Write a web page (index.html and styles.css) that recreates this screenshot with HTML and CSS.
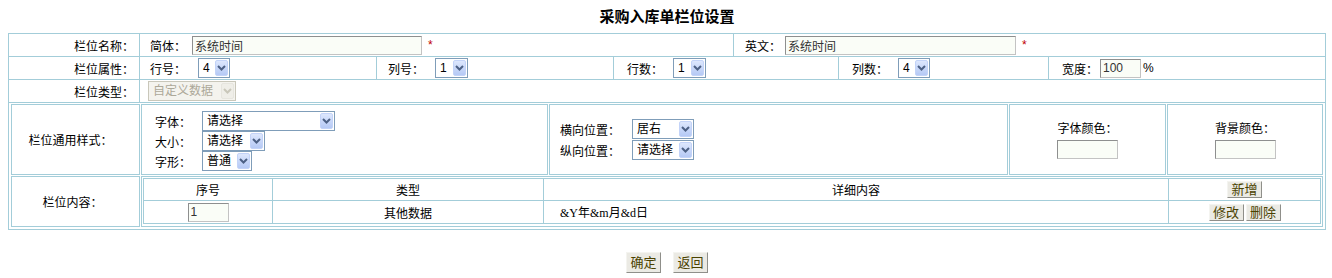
FILE: index.html
```html
<!DOCTYPE html>
<html lang="zh-CN">
<head>
<meta charset="UTF-8">
<meta name="viewport" content="width=device-width, initial-scale=1.0">
<title>采购入库单栏位设置</title>
<link rel="stylesheet" href="styles.css">
</head>
<body>
    <h1>采购入库单栏位设置</h1>

    <div class="frame">
        <!-- 栏位名称 -->
        <div class="row row-name">
            <div class="label">栏位名称：</div>
            <div class="cell pl-10"><span class="mr-6">简体：</span><input class="txt w230" type="text" value="系统时间"><span class="req">*</span></div>
            <div class="cell pl-11"><span class="mr-4">英文：</span><input class="txt w231" type="text" value="系统时间"><span class="req">*</span></div>
        </div>

        <!-- 栏位属性 -->
        <div class="row row-attr">
            <div class="label">栏位属性：</div>
            <div class="cell pl-10"><span class="mr-12">行号：</span>
                <span class="sel w32"><span class="sel-text">4</span><span class="sel-btn"><svg width="9" height="6" viewBox="0 0 9 6"><polyline points="1,1 4.5,4.5 8,1" fill="none" stroke="#4d6185" stroke-width="2"/></svg></span></span>
            </div>
            <div class="cell pl-11"><span class="mr-11">列号：</span>
                <span class="sel w33"><span class="sel-text">1</span><span class="sel-btn"><svg width="9" height="6" viewBox="0 0 9 6"><polyline points="1,1 4.5,4.5 8,1" fill="none" stroke="#4d6185" stroke-width="2"/></svg></span></span>
            </div>
            <div class="cell pl-13"><span class="mr-10">行数：</span>
                <span class="sel w33"><span class="sel-text">1</span><span class="sel-btn"><svg width="9" height="6" viewBox="0 0 9 6"><polyline points="1,1 4.5,4.5 8,1" fill="none" stroke="#4d6185" stroke-width="2"/></svg></span></span>
            </div>
            <div class="cell pl-13"><span class="mr-10">列数：</span>
                <span class="sel w32"><span class="sel-text">4</span><span class="sel-btn"><svg width="9" height="6" viewBox="0 0 9 6"><polyline points="1,1 4.5,4.5 8,1" fill="none" stroke="#4d6185" stroke-width="2"/></svg></span></span>
            </div>
            <div class="cell pl-13"><span class="mr-2">宽度：</span><input class="txt w41" type="text" value="100"><span class="unit">%</span></div>
        </div>

        <!-- 栏位类型 -->
        <div class="row row-type">
            <div class="label">栏位类型：</div>
            <div class="cell pl-8">
                <span class="sel disabled w88"><span class="sel-text">自定义数据</span><span class="sel-btn"><svg width="9" height="6" viewBox="0 0 9 6"><polyline points="1,1 4.5,4.5 8,1" fill="none" stroke="#c9c7ba" stroke-width="2"/></svg></span></span>
            </div>
        </div>

        <div class="styles">
            <div class="box box-label">栏位通用样式：</div>

            <div class="box box-font">
                <div class="line"><span class="cap-3">字体：</span>
                    <span class="sel w133"><span class="sel-text">请选择</span><span class="sel-btn"><svg width="9" height="6" viewBox="0 0 9 6"><polyline points="1,1 4.5,4.5 8,1" fill="none" stroke="#4d6185" stroke-width="2"/></svg></span></span>
                </div>
                <div class="line"><span class="cap-3">大小：</span>
                    <span class="sel w63"><span class="sel-text">请选择</span><span class="sel-btn"><svg width="9" height="6" viewBox="0 0 9 6"><polyline points="1,1 4.5,4.5 8,1" fill="none" stroke="#4d6185" stroke-width="2"/></svg></span></span>
                </div>
                <div class="line"><span class="cap-3">字形：</span>
                    <span class="sel w50"><span class="sel-text">普通</span><span class="sel-btn"><svg width="9" height="6" viewBox="0 0 9 6"><polyline points="1,1 4.5,4.5 8,1" fill="none" stroke="#4d6185" stroke-width="2"/></svg></span></span>
                </div>
            </div>

            <div class="box box-pos">
                <div class="line line-21"><span class="cap-5">横向位置：</span>
                    <span class="sel w62"><span class="sel-text">居右</span><span class="sel-btn"><svg width="9" height="6" viewBox="0 0 9 6"><polyline points="1,1 4.5,4.5 8,1" fill="none" stroke="#4d6185" stroke-width="2"/></svg></span></span>
                </div>
                <div class="line line-21"><span class="cap-5">纵向位置：</span>
                    <span class="sel w62"><span class="sel-text">请选择</span><span class="sel-btn"><svg width="9" height="6" viewBox="0 0 9 6"><polyline points="1,1 4.5,4.5 8,1" fill="none" stroke="#4d6185" stroke-width="2"/></svg></span></span>
                </div>
            </div>

            <div class="box box-color">
                <div class="color-cap">字体颜色：</div>
                <input class="txt w61" type="text" value="">
            </div>

            <div class="box box-color">
                <div class="color-cap">背景颜色：</div>
                <input class="txt w61" type="text" value="">
            </div>

            <div class="box box-label box-label-content">栏位内容：</div>

            <div class="box box-content">
                <div class="items">
                    <div class="it head">序号</div>
                    <div class="it head">类型</div>
                    <div class="it head">详细内容</div>
                    <div class="it head"><button class="btn btn-sm" type="button">新增</button></div>

                    <div class="it"><input class="txt w41" type="text" value="1"></div>
                    <div class="it">其他数据</div>
                    <div class="it detail">&amp;Y年&amp;m月&amp;d日</div>
                    <div class="it btns"><button class="btn btn-sm" type="button">修改</button><button class="btn btn-sm" type="button">删除</button></div>
                </div>
            </div>
        </div>
    </div>

    <div class="actions">
        <button class="btn btn-lg" type="button">确定</button>
        <button class="btn btn-lg" type="button">返回</button>
    </div>
</body>
</html>
```

FILE: styles.css
```css
body {
    margin: 8px 6px 8px 8px;
    background-color: #ffffff;
    color: #000000;
    font-family: "Liberation Sans", "Noto Sans CJK SC", sans-serif;
    font-size: 12px;
}

h1 {
    margin: 0 0 7px;
    font-size: 15px;
    line-height: 18px;
    font-weight: bold;
    text-align: center;
}

.frame {
    width: 1318px;
    box-sizing: border-box;
    border: 1px solid #a3cdd9;
}

.row {
    display: grid;
    height: 23px;
    box-sizing: border-box;
    border-bottom: 1px solid #a3cdd9;
}

.row-name {
    grid-template-columns: 130px 594px 1fr;
}

.row-attr {
    grid-template-columns: 130px 237px 237px 225px 210px 1fr;
}

.row-type {
    grid-template-columns: 130px 1fr;
}

.label {
    display: flex;
    align-items: center;
    justify-content: flex-end;
    padding-right: 5px;
}

.cell {
    display: flex;
    align-items: center;
    border-left: 1px solid #a3cdd9;
}

.pl-8 { padding-left: 8px; }
.pl-10 { padding-left: 10px; }
.pl-11 { padding-left: 11px; }
.pl-13 { padding-left: 13px; }

.mr-2 { margin-right: 2px; }
.mr-4 { margin-right: 4px; }
.mr-6 { margin-right: 6px; }
.mr-10 { margin-right: 10px; }
.mr-11 { margin-right: 11px; }
.mr-12 { margin-right: 12px; }

/* text inputs */
.txt {
    height: 19px;
    box-sizing: border-box;
    margin: 0;
    padding: 0 2px;
    border: 1px solid;
    border-color: #8e8f8f #c3c3c3 #c3c3c3 #8e8f8f;
    background-color: #fafdf7;
    color: #333333;
    font-family: "Liberation Sans", "Noto Sans CJK SC", sans-serif;
    font-size: 12px;
}

.w41 { width: 41px; }
.w61 { width: 61px; }
.w230 { width: 230px; }
.w231 { width: 231px; }

.req {
    margin-left: 6px;
    color: #c00000;
}

.unit {
    margin-left: 2px;
}

/* dropdowns */
.sel {
    display: inline-flex;
    align-items: center;
    height: 20px;
    box-sizing: border-box;
    padding: 1px;
    border: 1px solid #7f9db9;
    background-color: #ffffff;
}

.sel-text {
    flex: 1;
    padding-left: 3px;
    line-height: 16px;
    white-space: nowrap;
    overflow: hidden;
}

.sel-btn {
    display: flex;
    align-items: center;
    justify-content: center;
    width: 13px;
    height: 16px;
    box-sizing: border-box;
    border: 1px solid #c3d3f8;
    border-radius: 2px;
    background: linear-gradient(#dde7fd, #b5c9f5);
}

.sel.disabled {
    border-color: #c9c7ba;
    background-color: #f4f3ee;
    color: #aca899;
}

.sel.disabled .sel-btn {
    border-color: #e6e5de;
    background: #efeee8;
}

.w32 { width: 32px; }
.w33 { width: 33px; }
.w50 { width: 50px; }
.w62 { width: 62px; }
.w63 { width: 63px; }
.w88 { width: 88px; }
.w133 { width: 133px; }

/* style + content block */
.styles {
    display: grid;
    grid-template-columns: 129px 407px 459px 157px 1fr;
    grid-template-rows: 71px 51px;
    gap: 1px;
    padding: 1px 2px 2px 2px;
}

.box {
    box-sizing: border-box;
    border: 1px solid #a3cdd9;
}

.box-label {
    display: flex;
    align-items: center;
    justify-content: center;
    padding-right: 10px;
}

.box-label-content {
    padding-right: 6px;
}

.box-font {
    display: flex;
    flex-direction: column;
    justify-content: center;
    padding: 3px 0 0 13px;
}

.box-pos {
    display: flex;
    flex-direction: column;
    justify-content: center;
    padding-left: 10px;
}

.line {
    display: flex;
    align-items: center;
    height: 20px;
}

.line-21 {
    height: 21px;
}

.cap-3 {
    width: 47px;
}

.cap-5 {
    width: 72px;
}

.box-color {
    display: flex;
    flex-direction: column;
    align-items: center;
    justify-content: center;
    gap: 3px;
}

.color-cap {
    line-height: 16px;
}

.box-content {
    grid-column: 2 / 6;
    padding: 1px 1px 2px 1px;
}

.items {
    display: grid;
    grid-template-columns: 129px 271px 625px 1fr;
    grid-template-rows: 22px 23px;
    border-left: 1px solid #a3cdd9;
    border-top: 1px solid #a3cdd9;
}

.it {
    display: flex;
    align-items: center;
    justify-content: center;
    gap: 2px;
    border-right: 1px solid #a3cdd9;
    border-bottom: 1px solid #a3cdd9;
}

.it.detail {
    justify-content: flex-start;
    padding-left: 16px;
    font-family: "Liberation Serif", "Noto Sans CJK SC", serif;
}

/* buttons */
.btn {
    width: 35px;
    margin: 0;
    padding: 0;
    border: 1px solid;
    border-color: #f4f4f0 #8f8f8a #8f8f8a #f4f4f0;
    background-color: #ebeae4;
    color: #4a4200;
    font-family: "Liberation Sans", "Noto Sans CJK SC", sans-serif;
    font-size: 13px;
    line-height: 1;
}

.btn-sm {
    height: 17px;
}

.btn-lg {
    height: 21px;
}

.actions {
    display: flex;
    justify-content: center;
    gap: 12px;
    margin-top: 22px;
}
```
